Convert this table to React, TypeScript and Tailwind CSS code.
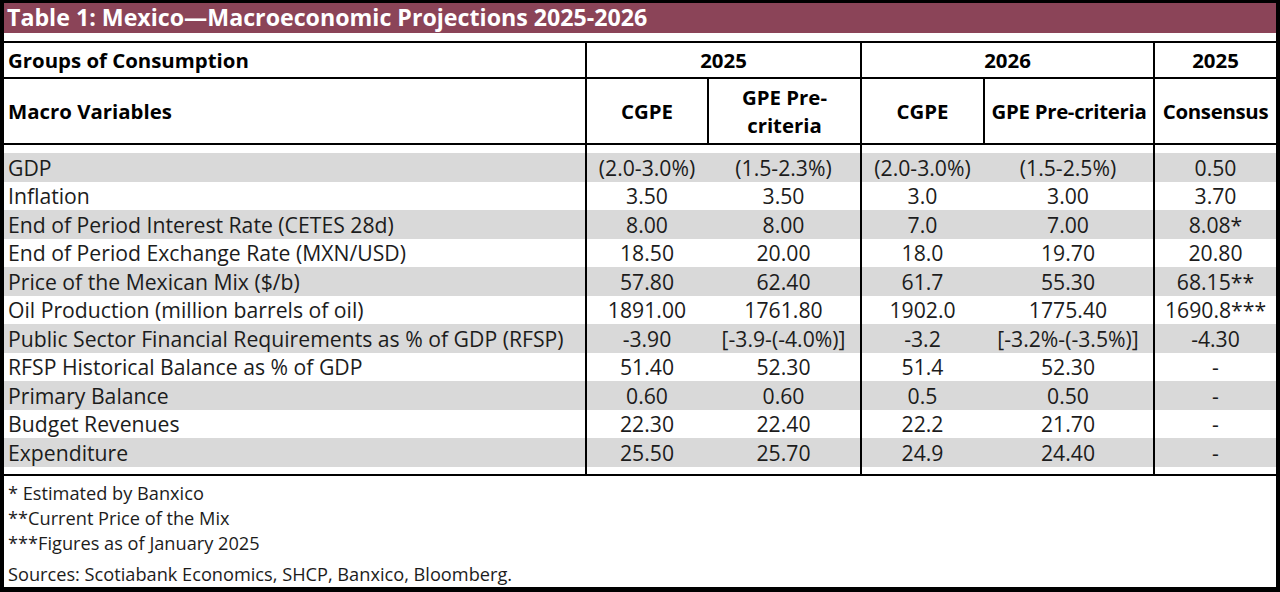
import React from "react";

const font = { fontFamily: '"Open Sans", "Noto Sans", sans-serif' };

type RowData = { label: string; v: [string, string, string, string, string] };

const rows: RowData[] = [
  { label: "GDP", v: ["(2.0-3.0%)", "(1.5-2.3%)", "(2.0-3.0%)", "(1.5-2.5%)", "0.50"] },
  { label: "Inflation", v: ["3.50", "3.50", "3.0", "3.00", "3.70"] },
  { label: "End of Period Interest Rate (CETES 28d)", v: ["8.00", "8.00", "7.0", "7.00", "8.08*"] },
  { label: "End of Period Exchange Rate (MXN/USD)", v: ["18.50", "20.00", "18.0", "19.70", "20.80"] },
  { label: "Price of the Mexican Mix ($/b)", v: ["57.80", "62.40", "61.7", "55.30", "68.15**"] },
  { label: "Oil Production (million barrels of oil)", v: ["1891.00", "1761.80", "1902.0", "1775.40", "1690.8***"] },
  { label: "Public Sector Financial Requirements as % of GDP (RFSP)", v: ["-3.90", "[-3.9-(-4.0%)]", "-3.2", "[-3.2%-(-3.5%)]", "-4.30"] },
  { label: "RFSP Historical Balance as % of GDP", v: ["51.40", "52.30", "51.4", "52.30", "-"] },
  { label: "Primary Balance", v: ["0.60", "0.60", "0.5", "0.50", "-"] },
  { label: "Budget Revenues", v: ["22.30", "22.40", "22.2", "21.70", "-"] },
  { label: "Expenditure", v: ["25.50", "25.70", "24.9", "24.40", "-"] },
];

function Spacer({ h }: { h: string }) {
  return (
    <div className={`flex ${h}`}>
      <div className="w-[581px]" />
      <div className="w-[122px] border-l-2 border-black" />
      <div className="w-[153px]" />
      <div className="w-[123px] border-l-2 border-black" />
      <div className="w-[170px]" />
      <div className="w-[123px] border-l-2 border-black" />
    </div>
  );
}

export default function App() {
  return (
    <div
      className="w-[1280px] h-[592px] bg-black pt-[3px] pl-[4px] pr-[4px] pb-[5px] overflow-hidden"
      style={font}
    >
      <div className="bg-white h-full flex flex-col">
        <div className="bg-[#8b4458] h-[30px] flex items-center pl-[3px] text-white font-bold text-[23.2px] leading-none whitespace-nowrap">
          Table 1: Mexico—Macroeconomic Projections 2025-2026
        </div>
        <div className="h-[8px]" />
        <div className="border-t-2 border-b-2 border-black text-[#1c1c1c]">
          {/* header row 1 */}
          <div className="flex h-[36px] border-b-2 border-black font-bold text-[20.4px] text-black leading-none">
            <div className="w-[581px] flex items-center pl-[4px]">Groups of Consumption</div>
            <div className="w-[275px] border-l-2 border-black flex items-center justify-center">2025</div>
            <div className="w-[293px] border-l-2 border-black flex items-center justify-center">2026</div>
            <div className="w-[123px] border-l-2 border-black flex items-center justify-center">2025</div>
          </div>
          {/* header row 2 */}
          <div className="flex h-[66px] border-b-2 border-black font-bold text-[20.4px] text-black leading-[28px]">
            <div className="w-[581px] flex items-center pl-[4px]">Macro Variables</div>
            <div className="w-[122px] border-l-2 border-black flex items-center justify-center">CGPE</div>
            <div className="w-[153px] border-l-2 border-black flex flex-col items-center justify-center text-center">
              <span>GPE Pre-</span>
              <span>criteria</span>
            </div>
            <div className="w-[123px] border-l-2 border-black flex items-center justify-center">CGPE</div>
            <div className="w-[170px] border-l-2 border-black flex items-center justify-center whitespace-nowrap tracking-[-0.3px]">GPE Pre-criteria</div>
            <div className="w-[123px] border-l-2 border-black flex items-center justify-center tracking-[-0.3px]">Consensus</div>
          </div>
          <Spacer h="h-[8px]" />
          {rows.map((r, i) => (
            <div
              key={r.label}
              className={`flex h-[28.5px] text-[21.2px] leading-none ${i % 2 === 0 ? "bg-[#d9d9d9]" : "bg-white"}`}
            >
              <div className="w-[581px] flex items-center pl-[4px] whitespace-nowrap">{r.label}</div>
              <div className="w-[122px] border-l-2 border-black flex items-center justify-center whitespace-nowrap">{r.v[0]}</div>
              <div className="w-[153px] flex items-center justify-center whitespace-nowrap">{r.v[1]}</div>
              <div className="w-[123px] border-l-2 border-black flex items-center justify-center whitespace-nowrap">{r.v[2]}</div>
              <div className="w-[170px] flex items-center justify-center whitespace-nowrap">{r.v[3]}</div>
              <div className="w-[123px] border-l-2 border-black flex items-center justify-center whitespace-nowrap">{r.v[4]}</div>
            </div>
          ))}
          <Spacer h="h-[7.5px]" />
        </div>
        <div className="flex flex-col pl-[4px] pt-[5px] text-[18.2px] text-[#1c1c1c] leading-[25px]">
          <div>* Estimated by Banxico</div>
          <div>**Current Price of the Mix</div>
          <div>***Figures as of January 2025</div>
          <div className="mt-[6px]">Sources: Scotiabank Economics, SHCP, Banxico, Bloomberg.</div>
        </div>
      </div>
    </div>
  );
}
